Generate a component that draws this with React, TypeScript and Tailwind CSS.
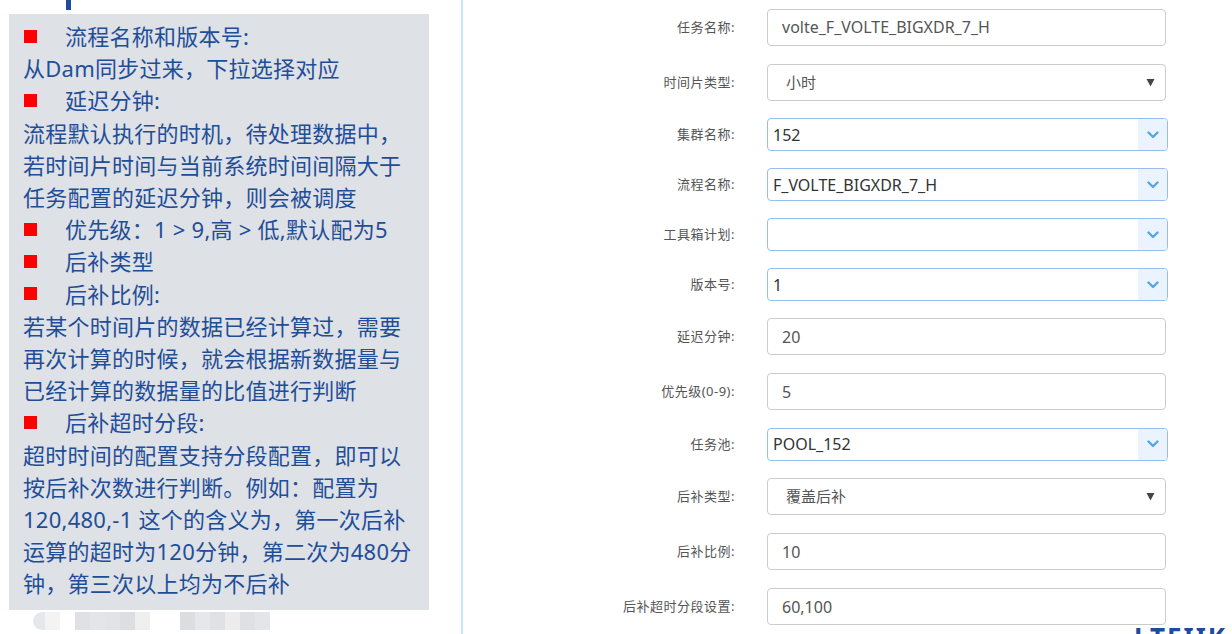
type Row =
  | { label: string; kind: 'input'; value: string }
  | { label: string; kind: 'select'; value: string }
  | { label: string; kind: 'combo'; value: string };

const rows: Row[] = [
  { label: '任务名称:', kind: 'input', value: 'volte_F_VOLTE_BIGXDR_7_H' },
  { label: '时间片类型:', kind: 'select', value: '小时' },
  { label: '集群名称:', kind: 'combo', value: '152' },
  { label: '流程名称:', kind: 'combo', value: 'F_VOLTE_BIGXDR_7_H' },
  { label: '工具箱计划:', kind: 'combo', value: '' },
  { label: '版本号:', kind: 'combo', value: '1' },
  { label: '延迟分钟:', kind: 'input', value: '20' },
  { label: '优先级(0-9):', kind: 'input', value: '5' },
  { label: '任务池:', kind: 'combo', value: 'POOL_152' },
  { label: '后补类型:', kind: 'select', value: '覆盖后补' },
  { label: '后补比例:', kind: 'input', value: '10' },
  { label: '后补超时分段设置:', kind: 'input', value: '60,100' },
];

const notes: { bullet?: boolean; text: string }[] = [
  { bullet: true, text: '流程名称和版本号:' },
  { text: '从Dam同步过来，下拉选择对应' },
  { bullet: true, text: '延迟分钟:' },
  { text: '流程默认执行的时机，待处理数据中，' },
  { text: '若时间片时间与当前系统时间间隔大于' },
  { text: '任务配置的延迟分钟，则会被调度' },
  { bullet: true, text: '优先级：1 > 9,高 > 低,默认配为5' },
  { bullet: true, text: '后补类型' },
  { bullet: true, text: '后补比例:' },
  { text: '若某个时间片的数据已经计算过，需要' },
  { text: '再次计算的时候，就会根据新数据量与' },
  { text: '已经计算的数据量的比值进行判断' },
  { bullet: true, text: '后补超时分段:' },
  { text: '超时时间的配置支持分段配置，即可以' },
  { text: '按后补次数进行判断。例如：配置为' },
  { text: '120,480,-1 这个的含义为，第一次后补' },
  { text: '运算的超时为120分钟，第二次为480分' },
  { text: '钟，第三次以上均为不后补' },
];

// blurred caption under the slide
const blurBlocks = [
  '#f3f3f4', '#ffffff', '#e0e1e4', '#e4e5e8', '#e2e3e6', '#dddee1', '#efeff0',
  '#ffffff', '#ffffff', '#dcdde0', '#e6e7ea', '#e0e1e4', '#ececed', '#dfe0e3', '#e4e5e8',
];

function Chevron() {
  return (
    <svg width="12" height="8" viewBox="0 0 12 8" fill="none">
      <polyline points="1.5,1.5 6,6 10.5,1.5" stroke="#56a6e6" strokeWidth="2.4" strokeLinecap="round" strokeLinejoin="round" />
    </svg>
  );
}

function Field({ row }: { row: Row }) {
  if (row.kind === 'combo') {
    return (
      <div className="flex h-[33px] w-[401px] overflow-hidden rounded-[4px] border border-[#97bdec] bg-white">
        <div className="flex flex-1 items-center pl-[5px] text-[16px] text-[#333]">{row.value}</div>
        <div className="flex w-[29px] items-center justify-center bg-[#eaf3fe]">
          <Chevron />
        </div>
      </div>
    );
  }
  const isSelect = row.kind === 'select';
  return (
    <div className="flex h-[37px] w-[399px] items-center rounded-[4px] border border-[#cccccc] bg-white pr-[10px] text-[#555]">
      <div className={`flex-1 ${isSelect ? 'pl-[18px] text-[15px]' : 'pl-[14px] text-[16px]'}`}>{row.value}</div>
      {isSelect && (
        <svg width="9" height="9" viewBox="0 0 9 9">
          <polygon points="0.5,1 8.5,1 4.5,8.5" fill="#444" />
        </svg>
      )}
    </div>
  );
}

export default function App() {
  return (
    <div
      className="relative flex h-[634px] w-[1232px] overflow-hidden bg-white"
      style={{ fontFamily: '"Noto Sans", "Noto Sans CJK SC", sans-serif' }}
    >
      <div className="flex w-[463px] shrink-0 flex-col border-r-2 border-[#c2e7f6] pl-[9px]">
        <div className="h-[14px]">
          <div className="ml-[57px] h-[10px] w-[5px] bg-[#1f4b9c]" />
        </div>
        <div className="h-[596px] w-[420px] bg-[#dee1e6] pt-[6px] pl-[14px] text-[22px] leading-[32.2px] text-[#1f4e98]">
          {notes.map((n, i) => (
            <div key={i} className="flex items-center whitespace-nowrap tracking-[0.25px]">
              {n.bullet && <span className="mr-[28px] ml-[1px] inline-block h-[13px] w-[13px] bg-[#ff0000]" />}
              <span>{n.text}</span>
            </div>
          ))}
        </div>
        <div className="mt-[2px] ml-[24px] flex h-[18px]">
          <div className="h-[18px] w-[12px] rounded-l-full bg-[#e6e7ea]" />
          {blurBlocks.map((c, i) => (
            <div key={i} className="h-[18px] w-[15px]" style={{ backgroundColor: c }} />
          ))}
        </div>
      </div>

      <div className="flex flex-col">
        {rows.map((r, i) => (
          <div key={i} className={`flex items-center ${r.kind === 'combo' ? 'h-[50px]' : 'h-[55px]'}`}>
            <div className="w-[272px] text-right text-[13px] tracking-[0.5px] text-[#555]">{r.label}</div>
            <div className="ml-[32px]">
              <Field row={r} />
            </div>
          </div>
        ))}
      </div>

      <div className="absolute top-[624px] left-[1134px] text-[26px] leading-none font-bold tracking-[2px] text-[#1f4b9c]">
        LTEIIK
      </div>
    </div>
  );
}
